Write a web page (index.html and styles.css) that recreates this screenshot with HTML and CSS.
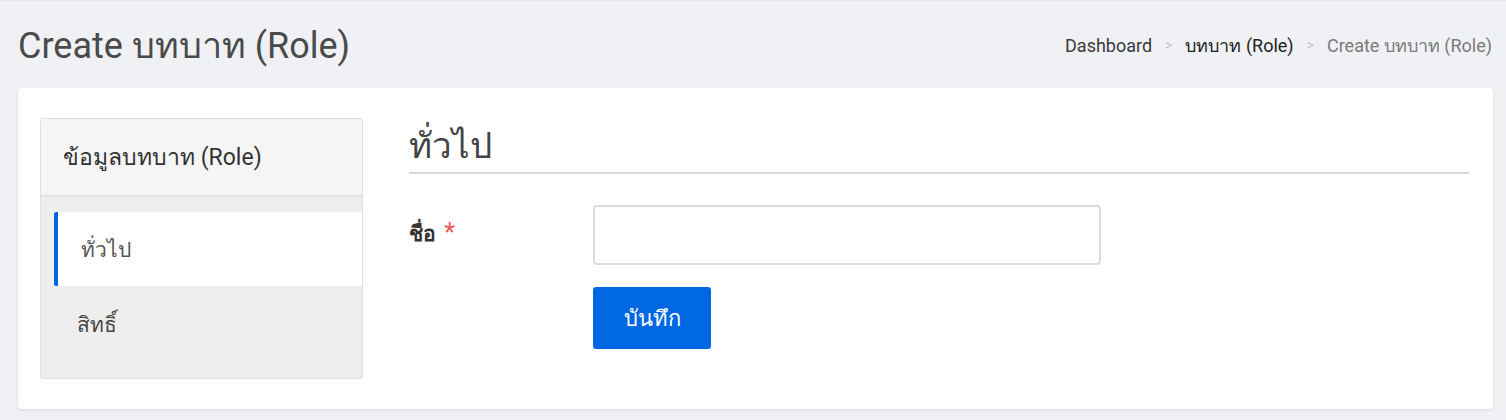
FILE: index.html
```html
<!DOCTYPE html>
<html lang="th">
<head>
<meta charset="utf-8">
<title>Create บทบาท (Role)</title>
<link rel="stylesheet" href="styles.css">
</head>
<body>
<div class="topline"></div>
<header class="page-header">
  <h1 class="page-title">Create บทบาท (Role)</h1>
  <nav class="breadcrumb">
    <a class="crumb crumb-link">Dashboard</a>
    <span class="sep">&gt;</span>
    <a class="crumb crumb-dark">บทบาท (Role)</a>
    <span class="sep">&gt;</span>
    <span class="crumb crumb-current">Create บทบาท (Role)</span>
  </nav>
</header>
<main class="card">
  <aside class="sidebar">
    <div class="sidebar-head">ข้อมูลบทบาท (Role)</div>
    <ul class="tabs">
      <li class="tab active">ทั่วไป</li>
      <li class="tab">สิทธิ์</li>
    </ul>
  </aside>
  <section class="content">
    <h2 class="section-title">ทั่วไป</h2>
    <form class="form">
      <div class="row">
        <label class="label">ชื่อ <span class="req">*</span></label>
        <input class="input" type="text">
      </div>
      <div class="row">
        <span class="label"></span>
        <button class="btn" type="button">บันทึก</button>
      </div>
    </form>
  </section>
</main>
</body>
</html>
```
FILE: styles.css
```css
* { box-sizing: border-box; }
html, body { margin: 0; padding: 0; }
body {
  background: #f0f1f5;
  font-family: Roboto, "Noto Sans", "DejaVu Sans", sans-serif;
  color: #333;
  height: 420px;
  overflow: hidden;
}
.topline {
  height: 2px;
  background: linear-gradient(#e4e5ea, #f0f1f5);
}
.page-header {
  display: flex;
  align-items: center;
  justify-content: space-between;
  padding: 0 14px 0 18px;
  height: 86px;
}
.page-title {
  margin: 0;
  font-size: 36px;
  font-weight: 400;
  color: #4a4a4a;
}
.breadcrumb {
  display: flex;
  align-items: center;
  font-size: 18px;
}
.crumb-link { color: #3a3a3a; }
.crumb-dark { color: #222; }
.crumb-current { color: #7a7a7a; }
.sep { color: #c4c4c4; font-size: 14px; margin: 0 13px; }
.card {
  display: flex;
  margin: 0 13px 0 18px;
  background: #fff;
  border-radius: 4px;
  box-shadow: 0 1px 3px rgba(0,0,0,0.10);
  padding: 30px 24px 30px 22px;
  height: 321px;
}
.sidebar {
  width: 323px;
  flex: none;
  background: #eeeeee;
  border: 1px solid #dedede;
  border-radius: 3px;
  overflow: hidden;
}
.sidebar-head {
  height: 78px;
  background: #f5f5f5;
  border-bottom: 2px solid #e2e2e2;
  display: flex;
  align-items: center;
  padding-left: 22px;
  font-size: 23px;
  color: #333;
}
.tabs {
  list-style: none;
  margin: 0;
  padding: 15px 0 0 13px;
}
.tab {
  height: 74px;
  display: flex;
  align-items: center;
  padding-left: 23px;
  font-size: 21px;
  color: #444;
}
.tab.active {
  background: #fff;
  border-left: 4px solid #0066e0;
  border-radius: 2px 0 0 2px;
  color: #555;
  margin-bottom: 1px;
}
.content {
  flex: 1;
  margin-left: 46px;
}
.section-title {
  margin: 0;
  font-size: 35px;
  font-weight: 400;
  color: #444;
  height: 56px;
  display: flex;
  align-items: center;
  border-bottom: 2px solid #d5d8e3;
}
.form { padding-top: 31px; }
.row { display: flex; align-items: center; margin-bottom: 22px; }
.label {
  width: 184px;
  flex: none;
  font-size: 21px;
  font-weight: 700;
  color: #333;
  align-self: flex-start;
  padding-top: 12px;
}
.req { color: #f25555; font-weight: 400; font-size: 25px; margin-left: 3px; }
.input {
  width: 508px;
  height: 60px;
  border: 2px solid #dcdcdc;
  border-radius: 4px;
  font-size: 18px;
  padding: 0 12px;
  background: #fff;
}
.btn {
  width: 118px;
  height: 62px;
  background: #0068e3;
  color: #fff;
  border: none;
  border-radius: 3px;
  font-size: 22px;
  font-family: inherit;
}
```
